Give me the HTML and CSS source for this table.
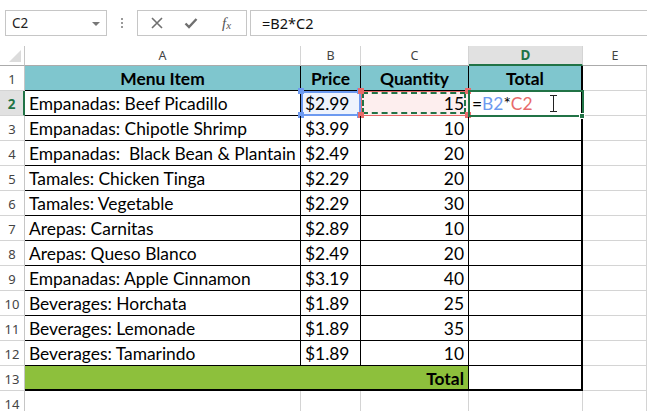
FILE: index.html
```html
<!DOCTYPE html>
<html>
<head>
<meta charset="utf-8">
<link rel="stylesheet" href="styles.css">
</head>
<body>
<div class="toolbar">
  <div class="namebox"><span class="nb-text">C2</span><span class="nb-arrow"></span></div>
  <div class="sep"><span></span><span></span><span></span></div>
  <div class="fxgroup">
    <svg class="ic" width="14" height="14" viewBox="0 0 14 14"><path d="M2 2 L12 12 M12 2 L2 12" stroke="#707070" stroke-width="1.6" fill="none"/></svg>
    <svg class="ic" width="14" height="14" viewBox="0 0 14 14"><path d="M1.5 7.5 L5 11 L12.5 3" stroke="#707070" stroke-width="2.4" fill="none"/></svg>
    <span class="fx">f<sub>x</sub></span>
  </div>
  <div class="formula">=B2*C2</div>
</div>
<div class="sheet">
  <div class="corner"><span class="tri"></span></div>
  <div class="ch">A</div>
  <div class="ch">B</div>
  <div class="ch">C</div>
  <div class="ch sel">D</div>
  <div class="ch last">E</div>

  <div class="rh">1</div>
  <div class="t hd">Menu Item</div>
  <div class="t hd">Price</div>
  <div class="t hd">Quantity</div>
  <div class="t hd d">Total</div>
  <div class="c"></div>

  <div class="rh rsel">2</div>
  <div class="t">Empanadas: Beef Picadillo</div>
  <div class="t refb">$2.99<span class="hb tl"></span><span class="hb tr"></span><span class="hb bl"></span><span class="hb br"></span></div>
  <div class="t n refc">15<span class="hr tl"></span><span class="hr tr"></span><span class="hr bl"></span><span class="hr br"></span></div>
  <div class="t d active">=<span class="fb">B2</span>*<span class="fc">C2</span>
    <svg class="ibeam" width="9" height="17" viewBox="0 0 9 17"><path d="M1 0.5 H8 M4.5 0.5 V16.5 M1 16.5 H8" stroke="#222" stroke-width="1" fill="none"/></svg>
    <span class="handle"></span>
  </div>
  <div class="c"></div>

  <div class="rh">3</div>
  <div class="t">Empanadas: Chipotle Shrimp</div>
  <div class="t">$3.99</div>
  <div class="t n">10</div>
  <div class="t d"></div>
  <div class="c"></div>

  <div class="rh">4</div>
  <div class="t pre">Empanadas:  Black Bean &amp; Plantain</div>
  <div class="t">$2.49</div>
  <div class="t n">20</div>
  <div class="t d"></div>
  <div class="c"></div>

  <div class="rh">5</div>
  <div class="t">Tamales: Chicken Tinga</div>
  <div class="t">$2.29</div>
  <div class="t n">20</div>
  <div class="t d"></div>
  <div class="c"></div>

  <div class="rh">6</div>
  <div class="t">Tamales: Vegetable</div>
  <div class="t">$2.29</div>
  <div class="t n">30</div>
  <div class="t d"></div>
  <div class="c"></div>

  <div class="rh">7</div>
  <div class="t">Arepas: Carnitas</div>
  <div class="t">$2.89</div>
  <div class="t n">10</div>
  <div class="t d"></div>
  <div class="c"></div>

  <div class="rh">8</div>
  <div class="t">Arepas: Queso Blanco</div>
  <div class="t">$2.49</div>
  <div class="t n">20</div>
  <div class="t d"></div>
  <div class="c"></div>

  <div class="rh">9</div>
  <div class="t">Empanadas: Apple Cinnamon</div>
  <div class="t">$3.19</div>
  <div class="t n">40</div>
  <div class="t d"></div>
  <div class="c"></div>

  <div class="rh">10</div>
  <div class="t">Beverages: Horchata</div>
  <div class="t">$1.89</div>
  <div class="t n">25</div>
  <div class="t d"></div>
  <div class="c"></div>

  <div class="rh">11</div>
  <div class="t">Beverages: Lemonade</div>
  <div class="t">$1.89</div>
  <div class="t n">35</div>
  <div class="t d"></div>
  <div class="c"></div>

  <div class="rh">12</div>
  <div class="t">Beverages: Tamarindo</div>
  <div class="t">$1.89</div>
  <div class="t n">10</div>
  <div class="t d"></div>
  <div class="c"></div>

  <div class="rh">13</div>
  <div class="t tot n">Total</div>
  <div class="t d bot"></div>
  <div class="c"></div>

  <div class="rh">14</div>
  <div class="c"></div>
  <div class="c"></div>
  <div class="c"></div>
  <div class="c"></div>
  <div class="c"></div>
</div>
</body>
</html>
```
FILE: styles.css
```css
* { box-sizing: border-box; }
html, body { margin: 0; padding: 0; background: #fff; overflow: hidden; }
body { width: 647px; height: 411px; font-family: "Segoe UI", "Noto Sans", sans-serif; }

.toolbar {
  height: 46px;
  display: flex;
  align-items: flex-start;
  padding: 10px 0 0 5px;
}
.namebox {
  width: 102px;
  height: 26px;
  border: 1px solid #c6c6c6;
  display: flex;
  align-items: center;
  justify-content: space-between;
  padding: 0 6px 0 6px;
  font-size: 13.5px;
  color: #222;
}
.nb-arrow {
  width: 0; height: 0;
  border-left: 4px solid transparent;
  border-right: 4px solid transparent;
  border-top: 4px solid #777;
  margin-top: 1px;
}
.sep {
  width: 30px;
  height: 26px;
  display: flex;
  flex-direction: column;
  align-items: center;
  justify-content: center;
  gap: 2px;
}
.sep span { width: 2px; height: 2px; background: #9a9a9a; }
.fxgroup {
  width: 110px;
  height: 26px;
  border: 1px solid #c6c6c6;
  display: flex;
  align-items: center;
  padding-left: 12px;
  gap: 20px;
}
.ic { display: block; }
.fx {
  font-family: "Liberation Serif", serif;
  font-style: italic;
  font-size: 15px;
  color: #555;
  margin-left: 4px;
  line-height: 1;
}
.fx sub { font-size: 11px; vertical-align: -1px; }
.formula {
  flex: 1;
  margin-left: 3px;
  height: 26px;
  border: 1px solid #c6c6c6;
  border-right: none;
  display: flex;
  align-items: center;
  padding-left: 11px;
  font-size: 14.5px;
  color: #111;
}

.sheet {
  display: grid;
  grid-template-columns: 25px 276px 60px 108px 114px 1fr;
  grid-template-rows: 20px repeat(14, 25px);
  font-family: Lato, "Noto Sans", sans-serif;
  font-size: 17.4px;
  color: #000;
}
.corner {
  border-right: 1px solid #c6c6c6;
  border-bottom: 1px solid #ababab;
  position: relative;
}
.tri {
  position: absolute;
  right: 3px; bottom: 3px;
  width: 0; height: 0;
  border-left: 12px solid transparent;
  border-bottom: 12px solid #dcdcdc;
}
.ch {
  border-right: 1px solid #d4d4d4;
  border-bottom: 1px solid #ababab;
  display: flex;
  align-items: center;
  justify-content: center;
  font-family: "Noto Sans", sans-serif;
  font-size: 12.5px;
  color: #444;
}
.ch.sel {
  background: #e1e1e1;
  border-bottom: 2px solid #217346;
  color: #217346;
  font-weight: bold;
  font-size: 13.5px;
}
.ch.last { border-right: none; }
.rh {
  border-right: 1px solid #c6c6c6;
  border-bottom: 1px solid #d4d4d4;
  display: flex;
  align-items: center;
  justify-content: center;
  font-family: "Noto Sans", sans-serif;
  font-size: 13px;
  color: #444;
  padding-top: 1px;
}
.rh.rsel {
  background: #e1e1e1;
  border-right: 2px solid #217346;
  color: #217346;
  font-weight: bold;
  font-size: 13.5px;
}
.c {
  border-right: 1px solid #d4d4d4;
  border-bottom: 1px solid #d4d4d4;
}
.t {
  border-right: 1px solid #000;
  border-bottom: 1px solid #000;
  display: flex;
  align-items: center;
  padding: 1px 4px 0 4px;
  white-space: nowrap;
  position: relative;
}
.t.pre { white-space: pre; }
.t.n { justify-content: flex-end; }
.t.hd {
  background: #7fc6ce;
  font-weight: bold;
  justify-content: center;
}
.t.d { border-right: 2px solid #000; }
.t.tot {
  grid-column: span 3;
  background: #8dc03c;
  font-weight: bold;
  border-bottom: 2px solid #000;
}
.t.bot { border-bottom: 2px solid #000; }

.refb {
  background: #eef3fd;
  outline: 2px solid #6d9af0;
  outline-offset: -2px;
}
.refc {
  background: #fdeeee;
  outline: 1px solid #e86a6a;
  outline-offset: -1px;
}
.refc::before {
  content: "";
  position: absolute;
  inset: 1px 2px 1px 1px;
  border: 2px dashed #217346;
}
.hb, .hr {
  position: absolute;
  width: 6px; height: 6px;
}
.hb { background: #6d9af0; }
.hr { background: #e86a6a; }
.tl { left: -3px; top: -3px; }
.tr { right: -3px; top: -3px; }
.bl { left: -3px; bottom: -3px; }
.br { right: -3px; bottom: -3px; }

.active {
  outline: 2px solid #217346;
  outline-offset: -1px;
  padding-left: 3px;
  z-index: 2;
}
.fb { color: #6d9af0; }
.fc { color: #e86a6a; }
.ibeam {
  position: absolute;
  left: 80px;
  top: 4px;
}
.handle {
  position: absolute;
  right: -4px;
  bottom: -4px;
  width: 6px; height: 6px;
  background: #217346;
  border: 1px solid #fff;
}
```
